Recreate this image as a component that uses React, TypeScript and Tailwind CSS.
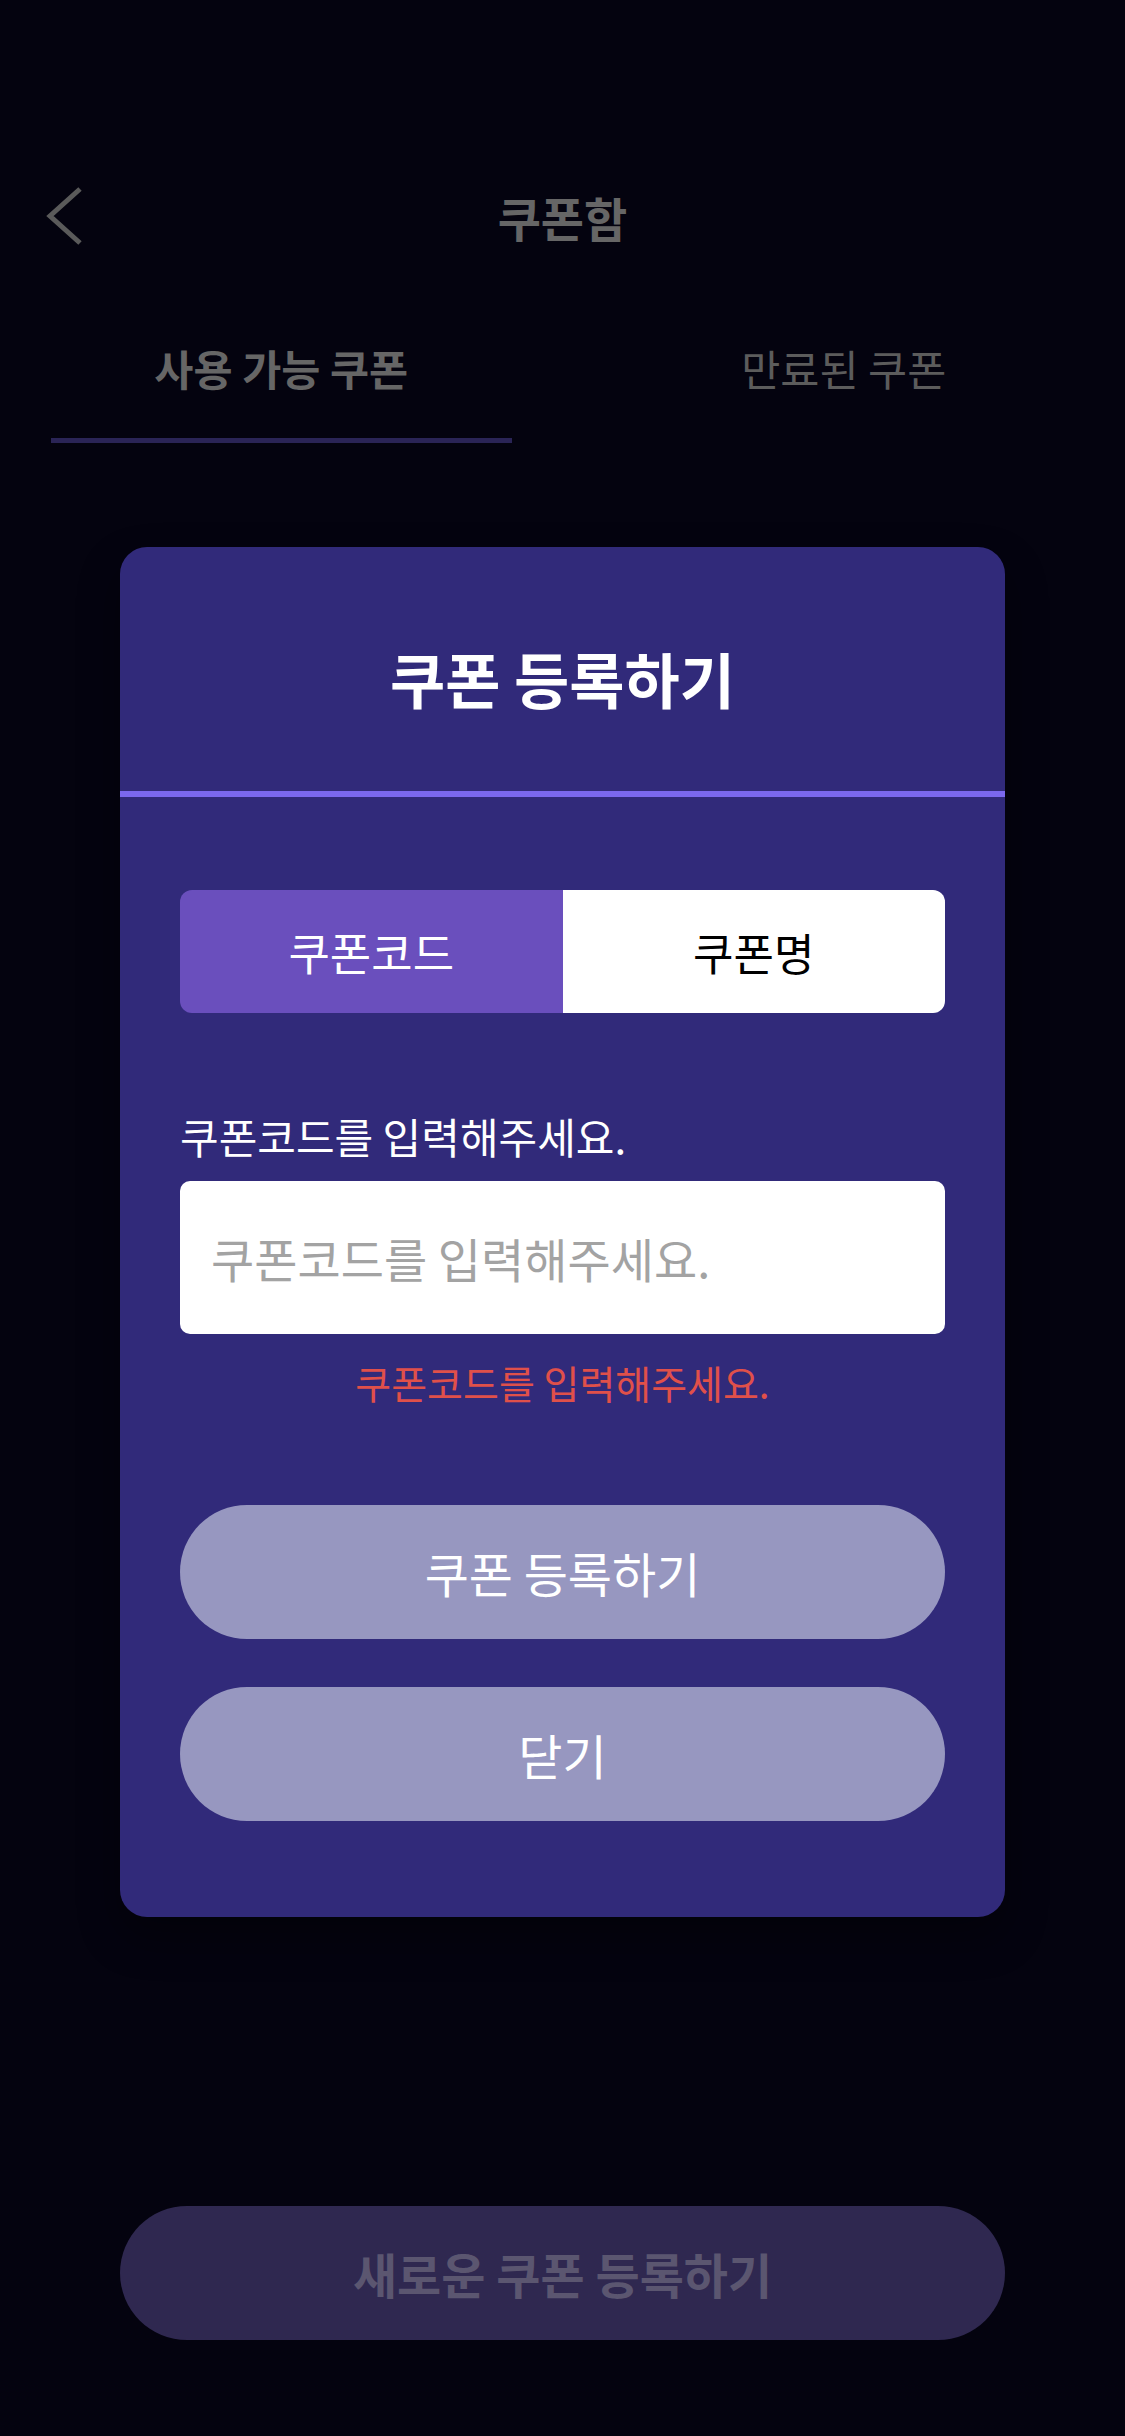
import React from "react";

export default function App() {
  return (
    <div className="relative flex flex-col w-[1125px] h-[2436px] bg-[#04030f] font-['Noto_Sans_CJK_KR','Noto_Sans',sans-serif] overflow-hidden">
      {/* Header */}
      <div className="pt-[146px]">
        <div className="grid grid-cols-[1fr_auto_1fr] items-center h-[140px] px-[45px]">
          <div className="flex items-center">
            <svg width="40" height="60" viewBox="0 0 40 60" fill="none">
              <polyline points="35,3 5,30 35,57" stroke="#5a5a5a" strokeWidth="5" fill="none" />
            </svg>
          </div>
          <div className="text-[47px] leading-none font-bold text-[#666666]">쿠폰함</div>
          <div />
        </div>
      </div>

      {/* Tabs */}
      <div className="grid grid-cols-2">
        <div className="flex flex-col items-center pt-[52px]">
          <div className="text-[42.5px] leading-[60px] font-bold text-[#666666]">사용 가능 쿠폰</div>
          <div className="mt-[40px] h-[5px] self-stretch mx-[51px] bg-[#2a2456]" />
        </div>
        <div className="flex flex-col items-center pt-[52px]">
          <div className="text-[42.5px] leading-[60px] text-[#5c5c5c]">만료된 쿠폰</div>
          <div className="mt-[40px] h-[5px] self-stretch mx-[51px] bg-transparent" />
        </div>
      </div>

      {/* Bottom button */}
      <div className="mt-auto mb-[96px] mx-[120px] h-[134px] rounded-full bg-[#2f2850] flex items-center justify-center">
        <span className="text-[48px] font-bold text-[#5b5670]">새로운 쿠폰 등록하기</span>
      </div>

      {/* Modal */}
      <div className="absolute left-[120px] top-[547px] w-[885px] rounded-[27px] bg-[#312a7a] overflow-hidden shadow-[0_20px_40px_rgba(0,0,0,0.35)]">
        <div className="h-[244px] flex items-center justify-center pt-[18px]">
          <span className="text-[60px] leading-none font-bold text-white">쿠폰 등록하기</span>
        </div>
        <div className="h-[6px] bg-[#7b68ee]" />
        <div className="px-[60px] pt-[93px] pb-[96px] flex flex-col">
          <div className="grid grid-cols-2 h-[123px] rounded-[12px] overflow-hidden">
            <div className="bg-[#6a4fbd] flex items-center justify-center text-[45px] text-white">쿠폰코드</div>
            <div className="bg-white flex items-center justify-center text-[44px] text-black">쿠폰명</div>
          </div>
          <div className="mt-[93px] text-[42px] leading-[60px] text-white">쿠폰코드를 입력해주세요.</div>
          <input
            className="mt-[15px] h-[153px] rounded-[10px] bg-white px-[31px] text-[47px] text-black placeholder:text-[#a3a3a3] outline-none"
            placeholder="쿠폰코드를 입력해주세요."
          />
          <div className="mt-[20px] text-[39px] leading-[56px] text-center text-[#e0504a]">쿠폰코드를 입력해주세요.</div>
          <div className="mt-[95px] h-[134px] rounded-full bg-[#9797c0] flex items-center justify-center text-[48px] text-white">쿠폰 등록하기</div>
          <div className="mt-[48px] h-[134px] rounded-full bg-[#9797c0] flex items-center justify-center text-[48px] text-white">닫기</div>
        </div>
      </div>
    </div>
  );
}
